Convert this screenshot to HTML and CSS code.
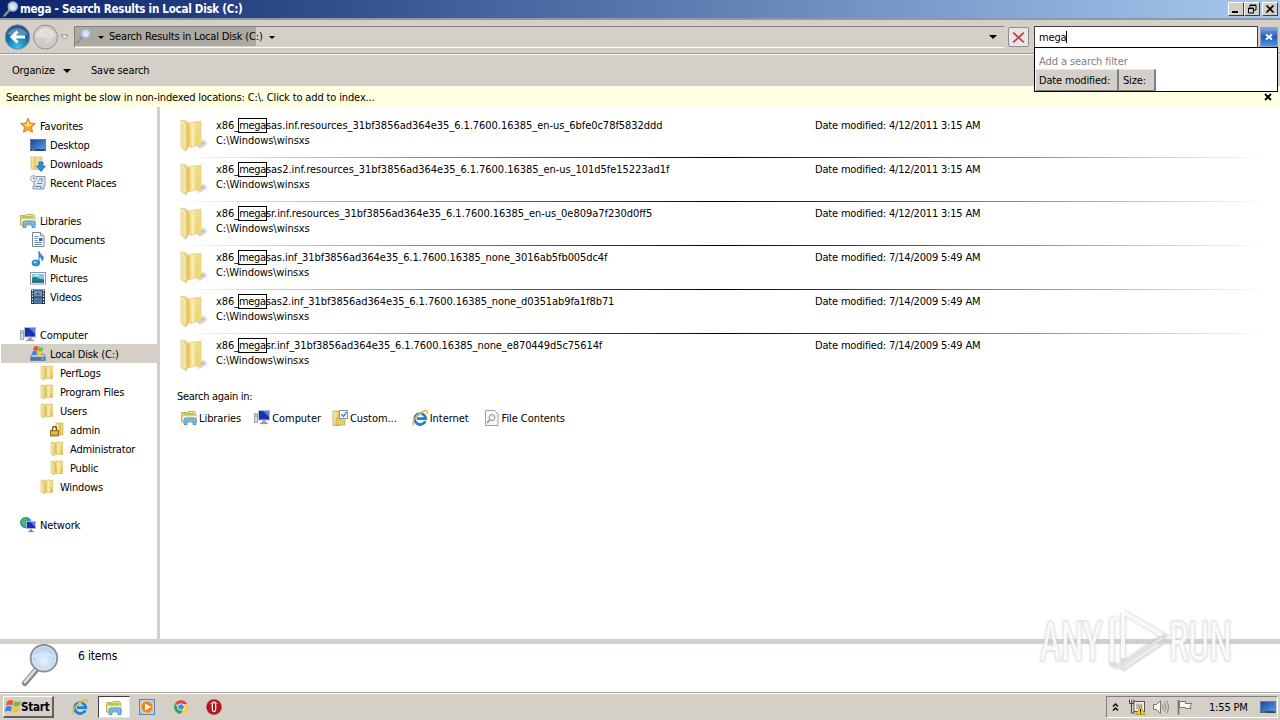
FILE: index.html
```
<!DOCTYPE html>
<html lang="en">

<head>
  <meta charset="utf-8">
  <meta name="viewport" content="width=device-width, initial-scale=1">
  <title>mega - Search Results in Local Disk (C:)</title>
  <link rel="stylesheet" href="styles.css">
</head>

<body>
  <!-- icon sprites -->
  <svg class="sprites" width="0" height="0">
    <defs>
      <linearGradient id="gold" x1="0" x2="1" y1="0" y2="0">
        <stop offset="0" stop-color="#f9edb4" />
        <stop offset="1" stop-color="#dfc05a" />
      </linearGradient>
      <linearGradient id="goldLight" x1="0" x2="1" y1="0" y2="1">
        <stop offset="0" stop-color="#f6e6a0" />
        <stop offset="1" stop-color="#e9cf72" />
      </linearGradient>
      <linearGradient id="screen" x1="0" x2="1" y1="0" y2="1">
        <stop offset="0" stop-color="#16419a" />
        <stop offset="1" stop-color="#5fa3e6" />
      </linearGradient>
      <radialGradient id="lens" cx="0.5" cy="0.6" r="0.6">
        <stop offset="0" stop-color="#e6f3ff" />
        <stop offset="1" stop-color="#a9cbf3" />
      </radialGradient>
      <radialGradient id="backBlue" cx="0.5" cy="0.9" r="0.85">
        <stop offset="0" stop-color="#35c7ec" />
        <stop offset="0.55" stop-color="#1773ad" />
        <stop offset="1" stop-color="#2b5280" />
      </radialGradient>
      <filter id="soft" x="-30%" y="-30%" width="160%" height="160%">
        <feGaussianBlur stdDeviation="1.2" />
      </filter>
    </defs>

    <symbol id="i-bigfolder" viewBox="-1 0 32 34">
      <path d="M18 31l9-5-3-4-6 3z" fill="#a9a9b6" opacity=".7" filter="url(#soft)" />
      <path d="M7 5l14-2v24l-14 3z" fill="url(#goldLight)" stroke="#dcc470" stroke-width=".5" />
      <path d="M13 5v23" stroke="#f8ecb2" stroke-width="3" />
      <path d="M1 2l5 1 3 4v19l-3 7-5-4z" fill="url(#gold)" stroke="#d6b95e" stroke-width=".6" />
      <path d="M2 4l3 3v23" fill="none" stroke="#fbf1bd" />
      <path d="M17 22l4-2v7l-4 1z" fill="#f2dc60" />
    </symbol>
    <symbol id="i-folder" viewBox="0 0 16 16">
      <path d="M6 1h6.500v12.500H6z" fill="url(#goldLight)" stroke="#d3b04c" stroke-width=".5" />
      <path d="M1 1l4 .5 1 2v9l-2 2.500-3-1.500z" fill="url(#gold)" stroke="#d0b052" stroke-width=".5" />
      <path d="M8.500 2v11" stroke="#f9edb0" stroke-width="1.500" />
      <path d="M10.500 9.500h2v4h-2z" fill="#e6c542" />
    </symbol>
    <symbol id="i-lockfolder" viewBox="0 0 16 16">
      <path d="M6 1h7v12H6z" fill="url(#goldLight)" stroke="#c9a541" stroke-width=".6" />
      <path d="M10 1v12" stroke="#d2ae3e" />
      <path d="M2.500 9V7a2 2.500 0 0 1 4 0v2" fill="none" stroke="#7c5a14" stroke-width="1.300" />
      <rect x=".5" y="8.500" width="8" height="5.500" fill="#d5a02d" stroke="#8a6215" stroke-width=".8" />
      <path d="M1.500 11h6" stroke="#f4d572" />
    </symbol>
    <symbol id="i-star" viewBox="0 0 16 16">
      <path d="M8 .3l2.200 4.800 5.200.6-3.900 3.500 1.100 5.300L8 11.800 3.400 14.500l1.100-5.300L.6 5.700l5.200-.6z" fill="#fba62e" stroke="#d56f10" stroke-width=".8" />
      <path d="M8 2.500l1.300 3.600 3.200.4L8 9 4 6.500l2.700-.4z" fill="#ffe07c" />
    </symbol>
    <symbol id="i-desktop" viewBox="0 0 16 16">
      <rect x=".5" y="2.500" width="15" height="11" fill="url(#screen)" stroke="#5b7fa8" />
      <path d="M1 13h14" stroke="#1a2536" stroke-width="1.200" />
      <path d="M2 13h3" stroke="#66c36a" />
    </symbol>
    <symbol id="i-downloads" viewBox="0 0 16 16">
      <path d="M1 1h11v12.500H3l-2-1z" fill="url(#goldLight)" stroke="#cda945" stroke-width=".6" />
      <path d="M5 2v11" stroke="#d9b74f" />
      <path d="M9 6h4v4h2.500L11 15.500 6.500 10H9z" fill="#2c8fe0" stroke="#1662a8" stroke-width=".7" />
    </symbol>
    <symbol id="i-recent" viewBox="0 0 16 16">
      <path d="M4 1.500h11v9H14v3.500H3v-3h1z" fill="#dfe9f1" stroke="#768ba0" stroke-width=".9" />
      <path d="M9 4h4M8 6h1M11 6h2M7 8.500h5M5 11.500h6M11 11v3" stroke="#63809c" />
      <circle cx="3.500" cy="3.500" r="3" fill="#eef5fa" stroke="#8b9dae" stroke-width=".9" />
      <path d="M3.500 1.500v2H5" fill="none" stroke="#56708a" stroke-width=".8" />
    </symbol>
    <symbol id="i-libraries" viewBox="0 0 16 16">
      <path d="M.5 2.500h5l1-1h7l1 1.500v9H.5z" fill="#f6e08a" stroke="#bf9f43" stroke-width=".8" />
      <path d="M2 4h11" stroke="#79b45e" stroke-width="1.200" />
      <path d="M1 5.500h14.500V12H1z" fill="#fbeeb0" stroke="#d5b75c" stroke-width=".6" />
      <path d="M3 14.500V10q0-2 2-2h8q2 0 2 2v4.500h-3V11H6v3.500z" fill="#7cc1f0" stroke="#3581c0" stroke-width=".8" />
    </symbol>
    <symbol id="i-documents" viewBox="0 0 16 16">
      <path d="M2.500.5h8l3.500 3.500v10.500h-11.500z" fill="#fbfdff" stroke="#76879a" />
      <path d="M10.500.5V4H14" fill="#cfdcea" stroke="#76879a" stroke-width=".8" />
      <path d="M4.500 4.500h4M4.500 6.500h3M4.500 8.500h3M4.500 10.500h7.500M4.500 12.500h7.500" stroke="#6c8fb3" />
      <rect x="9" y="6" width="3.500" height="3" fill="#3a5f96" />
    </symbol>
    <symbol id="i-music" viewBox="0 0 16 16">
      <path d="M9 12V.5q1 3 3.500 4.500Q14.500 7.500 12 9.500q.8-3-3-4" fill="#3a9de0" stroke="#1770b8" stroke-width=".9" />
      <ellipse cx="5.800" cy="12" rx="3.800" ry="3" fill="#2f97e0" stroke="#1770b8" stroke-width=".8" />
      <ellipse cx="5" cy="11.200" rx="1.500" ry="1" fill="#a9dcfa" />
    </symbol>
    <symbol id="i-pictures" viewBox="0 0 16 16">
      <rect x=".5" y="2.500" width="15" height="11.500" fill="#fff" stroke="#8a98a8" />
      <rect x="2" y="4" width="12" height="8.500" fill="#7cc6ee" />
      <path d="M2 8q3-2 6 0t6 1v3.500H2z" fill="#2c7f71" />
      <path d="M2 11h12v1.500H2z" fill="#1d59a5" />
      <path d="M4 5.500h5" stroke="#e3f5ff" />
    </symbol>
    <symbol id="i-videos" viewBox="0 0 16 16">
      <rect x="1" y=".5" width="14" height="14.500" fill="#283040" />
      <path d="M2.500 1v13.500M13.500 1v13.500" stroke="#e8edf2" stroke-width="1.300" stroke-dasharray="1.500 1.300" />
      <rect x="4" y="1.500" width="8" height="6" fill="#4fa1d8" />
      <rect x="4" y="8.500" width="8" height="6" fill="#3f83c0" />
      <path d="M5 6l3-3 3 3zM5 13l3-3 3 3z" fill="#a3474a" />
    </symbol>
    <symbol id="i-computer" viewBox="0 0 16 16">
      <path d="M.5 3.500h3v9h-3z" fill="#d9dde0" stroke="#8b9298" stroke-width=".8" />
      <path d="M1 6h2" stroke="#4ea84e" />
      <rect x="4.500" y=".5" width="11" height="9.500" fill="#1a2fb4" stroke="#b6bec9" />
      <path d="M9 1h6v6z" fill="#5a80e6" />
      <path d="M8.500 10.500h3l1 2.500h-5z" fill="#9aa2ad" />
      <path d="M6 13.500h8" stroke="#9299a2" stroke-width="1.300" />
    </symbol>
    <symbol id="i-disk" viewBox="0 0 16 16">
      <path d="M2 8h12l1.500 3.500v3H.5v-3z" fill="#bac5d0" stroke="#5d6f80" stroke-width=".7" />
      <path d="M1 11h14v3.500H1z" fill="#3e79b9" />
      <path d="M11 12.800h3" stroke="#5de85f" stroke-width="1.300" />
      <path d="M4 .8q2.500-1.500 4.500 0L7.500 4.800Q5 3.500 3 4.800z" fill="#e8542a" />
      <path d="M9 1.100q2.300 1 4.500 0l-1 4q-2.200 1-4.500 0z" fill="#79b83c" />
      <path d="M2.800 5.300q2-1 4.400 0l-1 4q-2.200-1-4.400 0z" fill="#3b82d8" />
      <path d="M7.900 5.700q2.200 1 4.400 0l-1 4q-2.200 1-4.400 0z" fill="#f6c52c" />
    </symbol>
    <symbol id="i-network" viewBox="0 0 16 16">
      <circle cx="5.800" cy="5.500" r="5.300" fill="#2c91d6" stroke="#2368a2" stroke-width=".7" />
      <path d="M2 2.500q3-3 5-1L5 4.500l2 2-2 3Q1 7.500 2 2.500z" fill="#57ba4e" />
      <rect x="6.500" y="4.500" width="9" height="7" fill="#1a2fb4" stroke="#aab8cc" />
      <path d="M10.500 5h4.500v5z" fill="#5a80e6" />
      <path d="M11 12v2M8.500 14.300h5" stroke="#6c7788" stroke-width="1.300" />
    </symbol>
    <symbol id="i-custom" viewBox="0 0 16 16">
      <path d="M1 1h7v14.500H1z" fill="url(#gold)" stroke="#b8943c" stroke-width=".7" />
      <path d="M4 8h9v7H4z" fill="#e8cb65" stroke="#b8943c" stroke-width=".5" />
      <rect x="7.500" y=".5" width="8" height="8" fill="#f7fbff" stroke="#7b98b8" />
      <path d="M9.500 4l2 2.500 3-4.500" fill="none" stroke="#2e6cb8" stroke-width="1.200" />
    </symbol>
    <symbol id="i-ie" viewBox="0 0 16 16">
      <path d="M13.300 11.200A5.500 5.500 0 1 1 13.700 8.700H5" fill="none" stroke="#2082d2" stroke-width="2.800" />
      <path d="M4 6.500q2-3 6-2" fill="none" stroke="#7cc9f5" />
      <path d="M2 15.300C-2 13 6 3 12.500 1c3-.9 3.500.8 2.500 3" fill="none" stroke="#efb52b" stroke-width="1.400" />
    </symbol>
    <symbol id="i-filecontents" viewBox="0 0 16 16">
      <path d="M1.500.5h9l3.500 3.500v11.500H1.500z" fill="#f7f8fa" stroke="#9a9fa8" />
      <circle cx="8" cy="7.500" r="3" fill="#e5f0fb" stroke="#8c929c" />
      <path d="M5.800 9.800L3 13" stroke="#8c929c" stroke-width="1.500" />
    </symbol>
    <symbol id="i-magnifier" viewBox="0 0 42 46">
      <path d="M17 26L5 40" stroke="#85898e" stroke-width="6" stroke-linecap="round" />
      <path d="M16 26L5 39" stroke="#d9dcdf" stroke-width="2.800" stroke-linecap="round" />
      <circle cx="24.500" cy="14.500" r="13.300" fill="url(#lens)" stroke="#8d9197" stroke-width="2.600" />
      <circle cx="24.500" cy="14.500" r="12" fill="none" stroke="#e1e8f0" stroke-width="1.200" />
      <path d="M14 12.500q10-4 21 0" fill="none" stroke="#d6e8fc" stroke-width="2" />
    </symbol>
    <symbol id="i-title-magnifier" viewBox="0 0 16 16">
      <path d="M6.500 9L1.500 14.500" stroke="#8e9297" stroke-width="2.400" stroke-linecap="round" />
      <circle cx="9.800" cy="5.500" r="4.600" fill="url(#lens)" stroke="#a9aeb6" stroke-width="1.300" />
    </symbol>
    <symbol id="i-flag" viewBox="0 0 16 16">
      <path d="M2 2.500q3.500-2.500 6.500-.7L7.300 6.500Q4.500 5 1 7z" fill="#ea5a2b" />
      <path d="M9.500 2.200q3.500 1.800 6.500-.4L14.700 6.500q-3.500 2-6.500.3z" fill="#77b83d" />
      <path d="M.9 8.200q3.200-2 6-.5L5.700 12.500Q3 11-.2 12.800z" fill="#3a82da" />
      <path d="M7.900 8.100q3.200 1.700 6.500-.3l-1.200 5q-3.300 2-6.500.2z" fill="#f5c32b" />
    </symbol>
    <symbol id="i-player" viewBox="0 0 16 16">
      <rect x=".5" y=".5" width="15" height="15" fill="#a7cff2" stroke="#5288bc" />
      <circle cx="8" cy="8" r="6.300" fill="#f48617" stroke="#fff" stroke-width=".6" />
      <path d="M6 4.500v7L12 8z" fill="#fff" />
    </symbol>
    <symbol id="i-chrome" viewBox="0 0 16 16">
      <path d="M8 8L2 4.500A7 7 0 0 1 14.200 5H8z" fill="#dc4a3b" />
      <path d="M14.200 5A7 7 0 0 1 7.500 15L11 9 8 5z" fill="#f8cf3b" />
      <path d="M2 4.500A7 7 0 0 0 7.500 15L10.500 10 5 9z" fill="#32a35a" />
      <circle cx="8" cy="8" r="3.600" fill="#fff" />
      <circle cx="8" cy="8" r="2.800" fill="#4284f0" />
    </symbol>
    <symbol id="i-opera" viewBox="0 0 16 16">
      <circle cx="8" cy="8" r="7.700" fill="#b5171c" />
      <path d="M3 5q5-6 10 0z" fill="#e05c5a" />
      <ellipse cx="8" cy="8" rx="2.400" ry="5.300" fill="#fff" />
      <ellipse cx="8" cy="8" rx="1.100" ry="4.300" fill="#a01418" />
    </symbol>
    <symbol id="i-traynet" viewBox="0 0 16 16">
      <path d="M.5.500v4h4.500v-4M2.800 1v3M2.500 4.500V14H6" fill="none" stroke="#444" />
      <rect x="5" y="2.500" width="10.500" height="10" fill="#f4f4f4" stroke="#555" />
      <rect x="7" y="4.500" width="6.500" height="5.500" fill="#b5b5b5" />
      <path d="M11.500 7l4.500 8.500H7z" fill="#f8d421" stroke="#a88400" stroke-width=".7" />
      <path d="M11.500 10v2.800M11.500 13.600v1.200" stroke="#000" />
    </symbol>
    <symbol id="i-sound" viewBox="0 0 16 16">
      <path d="M.5 5.500h3l4-4v13l-4-4h-3z" fill="#f5f5f5" stroke="#777" />
      <path d="M9.500 5.500q1.500 2.500 0 5M11.500 3.500q3 4.500 0 9M13.500 1.500q4 6.500 0 13" fill="none" stroke="#888" />
    </symbol>
    <symbol id="i-action" viewBox="0 0 16 16">
      <path d="M1.500 1v14.500" stroke="#777" stroke-width="1.800" />
      <path d="M2.500 2.500h6v2h6.500l-2 2.500 1 2.500H8.500v-1h-6z" fill="#fafafa" stroke="#777" />
    </symbol>
  </svg>

  <div class="window">
    <header class="titlebar">
      <svg class="title-icon"><use href="#i-title-magnifier" /></svg>
      <span class="title-text">mega - Search Results in Local Disk (C:)</span>
      <div class="win-buttons">
        <span class="win-btn"><svg viewBox="0 0 12 10"><path d="M2 8h6" stroke="#000" stroke-width="2" /></svg></span>
        <span class="win-btn"><svg viewBox="0 0 12 10"><path d="M4 3V1h6v5H8M4 1.500h6M2 4.500h6M2.500 4v5h5V4z" fill="none" stroke="#000" /></svg></span>
        <span class="win-btn close"><svg viewBox="0 0 12 10"><path d="M2.500 1.500l7 7M9.500 1.500l-7 7" stroke="#000" stroke-width="1.700" /></svg></span>
      </div>
    </header>

    <nav class="navbar">
      <svg class="nav-buttons" viewBox="0 0 70 30">
        <circle cx="17.500" cy="15" r="12.300" fill="url(#backBlue)" stroke="#7d93a8" />
        <path d="M7 12q10-12 21 0-10 4-21 0z" fill="#8fb8d8" opacity=".5" />
        <path d="M25 15H12M17.500 9.500L12 15l5.500 5.500" fill="none" stroke="#fff" stroke-width="3" />
        <circle cx="45.500" cy="15" r="12" fill="#cfccc8" stroke="#8e8e8e" />
        <path d="M35 14q10-16 21 0-10 4-21 0z" fill="#e4e1dd" />
        <path d="M39 15h12M46 9.500l5.500 5.500-5.500 5.500" fill="none" stroke="#dedbd7" stroke-width="2.500" />
        <path d="M61 13h7l-3.500 4z" fill="#fff" stroke="#777" stroke-width=".8" />
      </svg>
      <div class="address">
        <div class="progress"></div>
        <svg class="address-icon"><use href="#i-title-magnifier" /></svg>
        <i class="arrow"></i>
        <span class="crumb">Search Results in Local Disk (C:)</span>
        <i class="arrow"></i>
        <i class="arrow arrow-last"></i>
      </div>
      <span class="stop"><svg viewBox="0 0 18 18"><path d="M3 4l12 11M15 4L3 15" stroke="#c33f45" stroke-width="2" /></svg></span>
      <div class="search">
        <div class="search-box"><span>mega</span><i class="caret"></i></div>
        <span class="search-clear"><svg viewBox="0 0 16 16"><path d="M5 5.500l6 5M11 5.500l-6 5" stroke="#fff" stroke-width="2" /></svg></span>
        <div class="search-menu">
          <div class="filter-label">Add a search filter</div>
          <div class="filters">
            <span class="filter filter-date">Date modified:</span>
            <span class="filter filter-size">Size:</span>
          </div>
        </div>
      </div>
    </nav>

    <div class="commandbar">
      <span class="cmd-organize">Organize</span>
      <i class="arrow"></i>
      <span class="cmd-save">Save search</span>
    </div>

    <div class="infobar">
      <span>Searches might be slow in non-indexed locations: C:\. Click to add to index...</span>
      <svg class="info-close" viewBox="0 0 8 8"><path d="M1 1l6 6M7 1L1 7" stroke="#000" stroke-width="1.800" /></svg>
    </div>

    <main class="content">
      <aside class="tree">
        <div class="node"><svg><use href="#i-star" /></svg><span>Favorites</span></div>
        <div class="node lvl1"><svg><use href="#i-desktop" /></svg><span>Desktop</span></div>
        <div class="node lvl1"><svg><use href="#i-downloads" /></svg><span>Downloads</span></div>
        <div class="node lvl1 group-end"><svg><use href="#i-recent" /></svg><span>Recent Places</span></div>

        <div class="node"><svg><use href="#i-libraries" /></svg><span>Libraries</span></div>
        <div class="node lvl1"><svg><use href="#i-documents" /></svg><span>Documents</span></div>
        <div class="node lvl1"><svg><use href="#i-music" /></svg><span>Music</span></div>
        <div class="node lvl1"><svg><use href="#i-pictures" /></svg><span>Pictures</span></div>
        <div class="node lvl1 group-end"><svg><use href="#i-videos" /></svg><span>Videos</span></div>

        <div class="node"><svg><use href="#i-computer" /></svg><span>Computer</span></div>
        <div class="node lvl1 selected"><svg><use href="#i-disk" /></svg><span>Local Disk (C:)</span></div>
        <div class="node lvl2"><svg><use href="#i-folder" /></svg><span>PerfLogs</span></div>
        <div class="node lvl2"><svg><use href="#i-folder" /></svg><span>Program Files</span></div>
        <div class="node lvl2"><svg><use href="#i-folder" /></svg><span>Users</span></div>
        <div class="node lvl3"><svg><use href="#i-lockfolder" /></svg><span>admin</span></div>
        <div class="node lvl3"><svg><use href="#i-folder" /></svg><span>Administrator</span></div>
        <div class="node lvl3"><svg><use href="#i-folder" /></svg><span>Public</span></div>
        <div class="node lvl2 group-end"><svg><use href="#i-folder" /></svg><span>Windows</span></div>

        <div class="node"><svg><use href="#i-network" /></svg><span>Network</span></div>
      </aside>

      <section class="results">
        <div class="item">
          <svg><use href="#i-bigfolder" /></svg>
          <div class="item-name">x86_<mark>mega</mark>sas.inf.resources_31bf3856ad364e35_6.1.7600.16385_en-us_6bfe0c78f5832ddd<br>C:\Windows\winsxs</div>
          <div class="item-date">Date modified: 4/12/2011 3:15 AM</div>
        </div>
        <div class="item">
          <svg><use href="#i-bigfolder" /></svg>
          <div class="item-name">x86_<mark>mega</mark>sas2.inf.resources_31bf3856ad364e35_6.1.7600.16385_en-us_101d5fe15223ad1f<br>C:\Windows\winsxs</div>
          <div class="item-date">Date modified: 4/12/2011 3:15 AM</div>
        </div>
        <div class="item">
          <svg><use href="#i-bigfolder" /></svg>
          <div class="item-name">x86_<mark>mega</mark>sr.inf.resources_31bf3856ad364e35_6.1.7600.16385_en-us_0e809a7f230d0ff5<br>C:\Windows\winsxs</div>
          <div class="item-date">Date modified: 4/12/2011 3:15 AM</div>
        </div>
        <div class="item">
          <svg><use href="#i-bigfolder" /></svg>
          <div class="item-name">x86_<mark>mega</mark>sas.inf_31bf3856ad364e35_6.1.7600.16385_none_3016ab5fb005dc4f<br>C:\Windows\winsxs</div>
          <div class="item-date">Date modified: 7/14/2009 5:49 AM</div>
        </div>
        <div class="item">
          <svg><use href="#i-bigfolder" /></svg>
          <div class="item-name">x86_<mark>mega</mark>sas2.inf_31bf3856ad364e35_6.1.7600.16385_none_d0351ab9fa1f8b71<br>C:\Windows\winsxs</div>
          <div class="item-date">Date modified: 7/14/2009 5:49 AM</div>
        </div>
        <div class="item">
          <svg><use href="#i-bigfolder" /></svg>
          <div class="item-name">x86_<mark>mega</mark>sr.inf_31bf3856ad364e35_6.1.7600.16385_none_e870449d5c75614f<br>C:\Windows\winsxs</div>
          <div class="item-date">Date modified: 7/14/2009 5:49 AM</div>
        </div>

        <div class="again">Search again in:</div>
        <div class="again-links">
          <a><svg><use href="#i-libraries" /></svg><span>Libraries</span></a>
          <a><svg><use href="#i-computer" /></svg><span>Computer</span></a>
          <a><svg><use href="#i-custom" /></svg><span>Custom...</span></a>
          <a><svg><use href="#i-ie" /></svg><span>Internet</span></a>
          <a><svg><use href="#i-filecontents" /></svg><span>File Contents</span></a>
        </div>
      </section>
    </main>

    <div class="details">
      <svg><use href="#i-magnifier" /></svg>
      <span>6 items</span>
    </div>
  </div>

  <footer class="taskbar">
    <div class="start"><svg><use href="#i-flag" /></svg><span>Start</span></div>
    <div class="quick">
      <span class="task"><svg><use href="#i-ie" /></svg></span>
      <span class="task active"><svg><use href="#i-libraries" /></svg></span>
      <span class="task"><svg><use href="#i-player" /></svg></span>
      <span class="task"><svg><use href="#i-chrome" /></svg></span>
      <span class="task"><svg><use href="#i-opera" /></svg></span>
    </div>
    <div class="tray">
      <svg class="chevron" viewBox="0 0 7 9"><path d="M1 4l2.500-2.500L6 4M1 8l2.500-2.500L6 8" fill="none" stroke="#000" stroke-width="1.400" /></svg>
      <svg><use href="#i-traynet" /></svg>
      <svg><use href="#i-sound" /></svg>
      <svg><use href="#i-action" /></svg>
      <span class="clock">1:55 PM</span>
      <svg><use href="#i-desktop" /></svg>
    </div>
  </footer>

  <svg class="watermark" viewBox="0 0 210 86">
    <g class="wm-shadow" filter="url(#soft)">
      <text x="10" y="62" textLength="62" lengthAdjust="spacingAndGlyphs">ANY</text>
      <text x="139" y="62" textLength="63" lengthAdjust="spacingAndGlyphs">RUN</text>
      <path d="M87 20l-5 2v44l6 3M93 14v52M93 14l41 24-44 30" />
    </g>
    <g class="wm-face">
      <text x="10" y="62" textLength="62" lengthAdjust="spacingAndGlyphs">ANY</text>
      <text x="139" y="62" textLength="63" lengthAdjust="spacingAndGlyphs">RUN</text>
      <path d="M87 20l-5 2v42M93 60V14l39 23" />
    </g>
    <path class="wm-edge" d="M132 40L94 66M134 45L94 72l-6-3" />
  </svg>
</body>

</html>
```
FILE: styles.css
```
* {
  box-sizing: border-box;
}

body {
  margin: 0;
  width: 1280px;
  height: 720px;
  overflow: hidden;
  position: relative;
  background-color: #fff;
  color: #000;
  font-family: "DejaVu Sans Condensed", "DejaVu Sans", sans-serif;
  font-stretch: condensed;
  font-size: 11px;
  letter-spacing: -0.17px;
  line-height: 15px;
  white-space: nowrap;
}

svg {
  display: block;
  flex: none;
  width: 16px;
  height: 16px;
}

.sprites {
  position: absolute;
  width: 0;
  height: 0;
}

.window {
  display: flex;
  flex-direction: column;
  height: 693px;
}

/* Title bar */
.titlebar {
  display: flex;
  align-items: center;
  height: 18px;
  padding: 0 2px 0 3px;
  background: linear-gradient(to right, #0a246a, #a6caf0);
  color: #fff;
}

.title-text {
  margin-left: 1px;
  font-weight: bold;
  font-size: 11.500px;
  letter-spacing: -0.25px;
}

.win-buttons {
  display: flex;
  margin-left: auto;
}

.win-btn {
  display: flex;
  align-items: center;
  justify-content: center;
  width: 16px;
  height: 14px;
  background-color: #d4d0c8;
  border: 1px solid #fff;
  border-right-color: #404040;
  border-bottom-color: #404040;
}

.win-btn svg {
  width: 12px;
  height: 10px;
}

.win-btn.close {
  margin-left: 2px;
}

/* Navigation */
.navbar {
  display: flex;
  align-items: center;
  height: 37px;
  padding-right: 2px;
  background-color: #d4d0c8;
  border-top: 2px solid #8e97ab;
  border-bottom: 1px solid #fff;
  box-shadow: inset 0 -1px #9b9893;
}

.nav-buttons {
  width: 70px;
  height: 30px;
}

.address {
  display: flex;
  align-items: center;
  position: relative;
  width: 930px;
  height: 22px;
  margin-left: 4px;
  border: 1px solid #808080;
  border-right: none;
  border-bottom-color: #fff;
}

.progress {
  position: absolute;
  left: 0;
  top: 0;
  width: 181px;
  height: 19px;
  background-color: #aca8a2;
}

.address > * {
  z-index: 1;
}

.address > .progress {
  z-index: 0;
}

.address-icon {
  margin: 0 0 3px 1px;
}

.arrow {
  width: 0;
  height: 0;
  border: 3px solid transparent;
  border-top-color: #000;
  border-bottom: none;
}

.address .arrow {
  margin-left: 6px;
}

.crumb {
  width: 154px;
  margin: 0 0 2px 5px;
}

.address .arrow-last {
  margin-left: auto;
  margin-right: 7px;
  border-width: 4px 4px 0;
}

.stop {
  width: 21px;
  height: 20px;
  margin-left: 4px;
  padding: 1px 0 0 1px;
  background-color: #e9e7e5;
  border: 1px solid #8e8e8e;
  border-radius: 2px;
}

.stop svg {
  width: 17px;
  height: 16px;
}

.search {
  display: flex;
  position: relative;
  margin-left: 5px;
}

.search-box {
  display: flex;
  align-items: center;
  width: 224px;
  height: 22px;
  padding-left: 4px;
  background-color: #fff;
  border: 1px solid #404040;
}

.caret {
  width: 1px;
  height: 12px;
  background-color: #000;
}

.search-clear {
  width: 18px;
  height: 20px;
  margin: 1px 0 0 2px;
  padding: 1px 0;
  background: linear-gradient(#7ba9e6, #2457bd 50%, #459be6);
  border: 1px solid #8f9fbd;
}

.search-menu {
  position: absolute;
  z-index: 5;
  left: 0;
  top: 21px;
  width: 244px;
  height: 45px;
  padding: 6px 1px 0;
  background-color: #fff;
  border: 1px solid #000;
}

.filter-label {
  padding-left: 3px;
  color: #808080;
  letter-spacing: -0.1px;
}

.filters {
  display: flex;
}

.filter {
  height: 22px;
  padding: 3px 0 0 3px;
  background-color: #d4d0c8;
  border-top: 1px solid #e9e6e0;
  border-right: 2px solid #808080;
  border-bottom: 1px solid #808080;
}

.filter-date {
  width: 83px;
}

.filter-size {
  width: 37px;
  padding-left: 4px;
}

/* Command bar */
.commandbar {
  display: flex;
  align-items: center;
  height: 31px;
  padding-left: 12px;
  background-color: #d4d0c8;
}

.commandbar .arrow {
  margin-left: 8px;
  border-width: 4px 4px 0;
}

.cmd-organize {
  width: 43px;
}

.cmd-save {
  margin-left: 20px;
}

.infobar {
  display: flex;
  align-items: center;
  justify-content: space-between;
  height: 21px;
  padding: 1px 8px 0 6px;
  background-color: #ffffe1;
  letter-spacing: -0.14px;
}

.info-close {
  width: 8px;
  height: 8px;
}

/* Tree + results */
.content {
  display: flex;
  height: 532px;
}

.tree {
  width: 160px;
  padding: 9px 0 0 1px;
  border-right: 3px solid #d4d0c8;
}

.node {
  display: flex;
  align-items: center;
  height: 19px;
  padding-left: 19px;
}

.node span {
  margin: 1px 0 0 4px;
  padding-top: 1px;
}

.node.lvl1 {
  padding-left: 29px;
}

.node.lvl2 {
  padding-left: 39px;
}

.node.lvl3 {
  padding-left: 49px;
}

.node.group-end {
  margin-bottom: 19px;
}

.node.selected {
  background-color: #d4d0c8;
}

.results {
  flex: 1;
  padding: 7px 12px 0 17px;
}

.item {
  display: flex;
  height: 44px;
  padding: 4px 0 0 2px;
  background: linear-gradient(to right, transparent, #000 50%, transparent) bottom / 100% 1px no-repeat;
}

.item:nth-child(6) {
  background: none;
}

.item svg {
  width: 32px;
  height: 34px;
}

.item-name {
  width: 599px;
  margin-left: 5px;
  letter-spacing: -0.04px;
}

.item:nth-child(n+4) .item-name {
  letter-spacing: -0.08px;
}

.item-date {
  letter-spacing: -0.18px;
}

.item mark {
  background: none;
  color: inherit;
  letter-spacing: -0.35px;
  outline: 1px solid #000;
}

.again {
  margin-top: 11px;
  letter-spacing: -0.3px;
}

.again-links {
  display: flex;
  margin-top: 6px;
  padding-left: 4px;
}

.again-links a {
  display: flex;
  align-items: center;
  margin-right: 15px;
}

.again-links a:nth-child(1) {
  margin-right: 13px;
}

.again-links a:nth-child(2) {
  margin-right: 11px;
}

.again-links span {
  margin-left: 2px;
  letter-spacing: -0.06px;
}

.details {
  display: flex;
  flex: 1;
  padding-left: 20px;
  border-top: 5px solid #d4d0c8;
  border-bottom: 1px solid #aca8a2;
  font-size: 12px;
}

.details svg {
  width: 41px;
  height: 45px;
}

.details span {
  margin: 5px 0 0 17px;
}

/* Taskbar */
.taskbar {
  display: flex;
  height: 27px;
  padding: 2px 2px 1px 3px;
  background-color: #d4d0c8;
  border-top: 1px solid #fff;
}

.start {
  display: flex;
  align-items: center;
  width: 51px;
  height: 22px;
  padding-left: 1px;
  border: 1px solid #fff;
  border-right: 2px solid #606060;
  border-bottom: 2px solid #606060;
  font-weight: bold;
  font-size: 11.500px;
}

.start span {
  padding-top: 2px;
}

.quick {
  display: flex;
  margin-left: 10px;
}

.task {
  display: flex;
  align-items: center;
  justify-content: center;
  width: 32px;
  height: 22px;
  margin-right: 1.500px;
}

.task.active {
  padding-top: 2px;
  background-color: #fff;
  border: 1px solid #404040;
  border-right-color: #e8e5e0;
  border-bottom-color: #e8e5e0;
}

.tray {
  display: flex;
  align-items: center;
  width: 172px;
  height: 22px;
  margin-left: auto;
  padding-left: 5px;
  border: 1px solid #808080;
  border-right-color: #fff;
  border-bottom-color: #fff;
}

.tray svg {
  margin-right: 8px;
}

.tray .chevron {
  width: 7px;
  height: 10px;
  margin-right: 10px;
}

.clock {
  width: 41px;
  margin: 0 10px 0 8px;
}

.tray svg:last-child {
  margin-right: 0;
}

/* Watermark over the desktop */
.watermark {
  position: absolute;
  left: 1030px;
  top: 598px;
  width: 210px;
  height: 86px;
  overflow: visible;
}

.watermark text {
  font-family: Roboto, sans-serif;
  font-size: 53px;
  letter-spacing: 0;
}

.wm-shadow {
  fill: #c8c8c8;
  stroke: #c8c8c8;
  stroke-width: 3;
  opacity: 0.65;
}

.wm-shadow path {
  fill: none;
  stroke-width: 6;
}

.wm-face {
  fill: #fff;
  opacity: 0.85;
}

.wm-face path {
  fill: none;
  stroke: #fff;
  stroke-width: 4;
}

.wm-edge {
  fill: none;
  stroke: #e2e2e2;
  stroke-width: 3;
}
```
